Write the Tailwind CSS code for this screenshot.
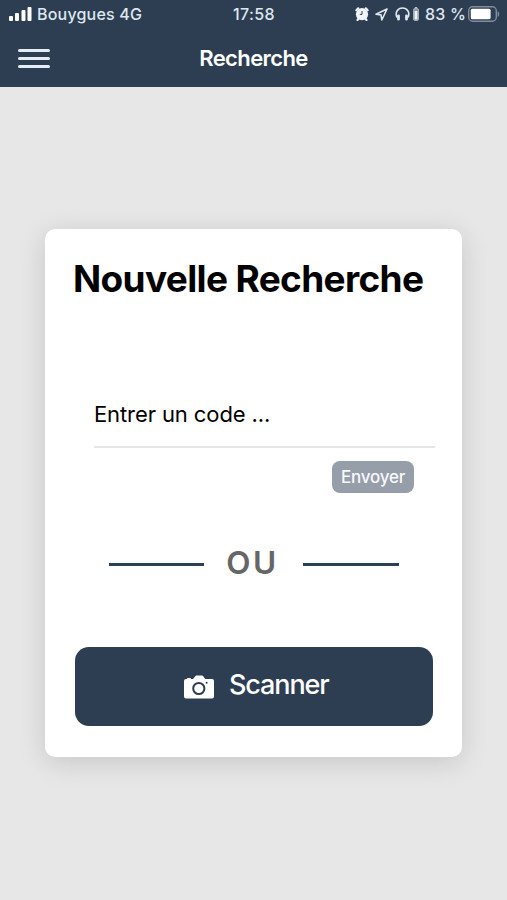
<!DOCTYPE html>
<html lang="fr">
<head>
  <meta charset="UTF-8" />
  <title>Recherche</title>
  <script src="https://cdn.jsdelivr.net/npm/@tailwindcss/browser@4"></script>
</head>
<body class="min-h-screen bg-[#e7e7e7] font-['Inter','Liberation_Sans',sans-serif] overflow-hidden">
  <header class="h-[87px] bg-[#2d3e52] text-white">
    <!-- status bar -->
    <div class="h-7 grid grid-cols-[233px_42px_1fr] items-center text-[16px] leading-7 font-medium text-[#dfe7ef] whitespace-nowrap">
      <div class="flex items-center pl-[9px] gap-[5px]">
        <svg class="w-[23px] h-[14px]" viewBox="0 0 23 14" fill="#fff">
          <rect x="0" y="9" width="4" height="5" rx="1" />
          <rect x="6" y="6" width="4" height="8" rx="1" />
          <rect x="12.5" y="3" width="4" height="11" rx="1" />
          <rect x="18.5" y="0" width="4" height="14" rx="1" />
        </svg>
        <span class="tracking-[0.2px]">Bouygues 4G</span>
      </div>
      <span class="tracking-[0.4px]">17:58</span>
      <div class="flex items-center justify-end pr-[7px]">
        <svg class="w-[14px] h-[14px] mr-[6px]" viewBox="0 0 14 14">
          <circle cx="7" cy="7.2" r="6.1" fill="#f1f5f9" />
          <path d="M1.4 3.2 3.2 1.4M12.6 3.2 10.8 1.4M2.5 13l1.4-1.6M11.5 13l-1.4-1.6" stroke="#f1f5f9" stroke-width="2.2" stroke-linecap="round" />
          <path d="M7 4v3.4H4.8" fill="none" stroke="#2d3e52" stroke-width="1" />
        </svg>
        <svg class="w-[13px] h-[13px] mr-[7px]" viewBox="0 0 13 13">
          <path d="M12 1 1 6.2l5 .7.8 5.1z" fill="none" stroke="#dfe7ef" stroke-width="1.6" stroke-linejoin="round" />
        </svg>
        <svg class="w-[15px] h-[14px] mr-[3px]" viewBox="0 0 15 14">
          <path d="M1.9 10.5C-.3 5 3 1 7.5 1s7.8 4 5.6 9.5" fill="none" stroke="#dfe7ef" stroke-width="1.6" />
          <path d="M3.5 8.8v3.4M11.5 8.8v3.4" stroke="#dfe7ef" stroke-width="2.8" stroke-linecap="round" />
        </svg>
        <svg class="w-[6px] h-[14px] mr-[6px]" viewBox="0 0 6 14">
          <rect x="1.8" y="0" width="2.4" height="2" fill="#b4bec8" />
          <rect x=".6" y="1.6" width="4.8" height="11.8" rx="1" fill="#8d9aa7" stroke="#a9b4bf" />
          <rect x="1.6" y="4" width="2.8" height="8.5" fill="#eef2f6" />
        </svg>
        <span class="tracking-[0.2px] mr-[-1px]">83 %</span>
        <svg class="w-[32px] h-[16px] ml-[3px]" viewBox="0 0 32 16">
          <rect x=".7" y=".7" width="27.6" height="14.6" rx="4" fill="none" stroke="#7f8d9c" stroke-width="1.4" />
          <rect x="2.8" y="2.8" width="19.8" height="10.4" rx="1.5" fill="#fff" />
          <path d="M29.6 5.2c2.2.8 2.2 4.800 0 5.600z" fill="#7f8d9c" />
        </svg>
      </div>
    </div>
    <!-- nav bar -->
    <div class="h-[59px] grid grid-cols-[1fr_auto_1fr] items-center px-[18px] pt-px">
      <div class="flex flex-col gap-[5px] w-8">
        <span class="h-[3px] rounded-full bg-[#e4edf5]"></span>
        <span class="h-[3px] rounded-full bg-[#e4edf5]"></span>
        <span class="h-[3px] rounded-full bg-[#e4edf5]"></span>
      </div>
      <h1 class="text-[22px] font-semibold tracking-[-0.6px]">Recherche</h1>
    </div>
  </header>

  <main class="mt-[142px] ml-[45px] w-[417px] h-[528px] bg-white rounded-[10px] shadow-[0_5px_28px_rgba(0,0,0,0.14)] flex flex-col whitespace-nowrap">
    <h2 class="mt-[27px] pl-[28px] text-[37px] leading-[46px] font-bold text-black tracking-[-0.65px]">Nouvelle Recherche</h2>

    <div class="mt-[83px] ml-[49px] w-[341px] h-[63px] border-b-2 border-[#e6e6e6] flex items-center pb-[2px] text-[22px] text-black tracking-[-0.1px]">Entrer un code ...</div>
    <button class="mt-[13px] ml-[287px] w-[82px] h-8 shrink-0 rounded-lg bg-[#969eaa] text-[#f7f9fb] text-[17px] font-medium tracking-[-0.2px] pt-px">Envoyer</button>

    <div class="mt-[50px] ml-[64px] w-[290px] h-10 flex items-center justify-between">
      <span class="w-[95px] h-[3px] mt-[3px] bg-[#2d3e57]"></span>
      <span class="text-[31.5px] leading-10 font-semibold text-[#666] tracking-[2.5px] mr-[2px]">OU</span>
      <span class="w-[96px] h-[3px] mt-[3px] bg-[#2d3e57]"></span>
    </div>

    <button class="mt-[64px] ml-[30px] w-[358px] h-[79px] shrink-0 rounded-[14px] bg-[#2d3e52] text-white flex items-center pl-[109px] gap-[15px]">
      <svg class="w-[30px] h-[24px]" viewBox="0 0 30 24">
        <path d="M2 4h1.2V2.9h3.6V4h2.200L11.300 1.200Q11.800.6 12.600.6h5.300q.8 0 1.300.6L21.200 4H28q2 0 2 2V21.500q0 2-2 2H2q-2 0-2-2V6q0-2 2-2z" fill="#fff" />
        <circle cx="14.8" cy="13.5" r="5.6" fill="#fff" stroke="#2d3e52" stroke-width="2" />
        <circle cx="22.6" cy="7.8" r="1" fill="#2d3e52" />
      </svg>
      <span class="text-[27px] font-medium tracking-[-1.1px] -translate-y-px">Scanner</span>
    </button>
  </main>
</body>
</html>
